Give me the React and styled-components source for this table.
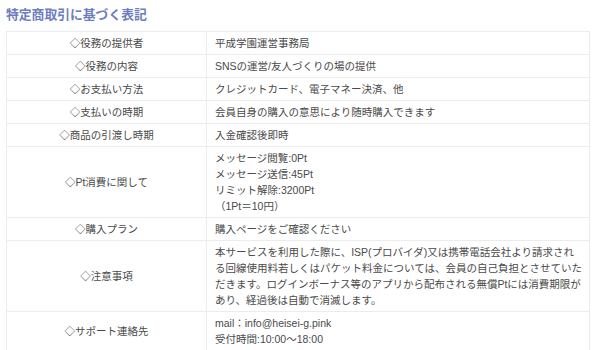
import React from "react";
import styled, { createGlobalStyle } from "styled-components";

const Global = createGlobalStyle`
  html, body { margin: 0; padding: 0; background: #fff; }
  body { font-family: "Liberation Sans", "Noto Sans CJK JP", sans-serif; }
`;

const Page = styled.div`
  padding: 7px 10px 0 6px;
  width: 584px;
`;

const Title = styled.h2`
  margin: 0 0 8px 0;
  font-size: 12.8px;
  line-height: 16px;
  font-weight: bold;
  color: #6c7dc0;
  font-family: "Liberation Sans", "Noto Sans CJK JP", sans-serif;
`;

const Table = styled.table`
  width: 584px;
  border-collapse: collapse;
  table-layout: fixed;
  font-size: 10.5px;
  line-height: 16px;
  color: #4a4a4a;
  font-family: "Liberation Sans", "Noto Sans CJK JP", sans-serif;
`;

const Cell = styled.td`
  border: 1px solid #ececec;
  padding: ${(p) => (p.$head ? "3px 8px" : "3px 6px 3px 8px")};
  vertical-align: middle;
  text-align: ${(p) => (p.$head ? "center" : "left")};
  width: ${(p) => (p.$head ? "200px" : "auto")};
  box-sizing: border-box;
`;

const Line = styled.div`
  height: auto;
`;

const rows = [
  ["◇役務の提供者", ["平成学園運営事務局"]],
  ["◇役務の内容", ["SNSの運営/友人づくりの場の提供"]],
  ["◇お支払い方法", ["クレジットカード、電子マネー決済、他"]],
  ["◇支払いの時期", ["会員自身の購入の意思により随時購入できます"]],
  ["◇商品の引渡し時期", ["入金確認後即時"]],
  ["◇Pt消費に関して", ["メッセージ閲覧:0Pt", "メッセージ送信:45Pt", "リミット解除:3200Pt", "（1Pt＝10円）"]],
  ["◇購入プラン", ["購入ページをご確認ください"]],
  [
    "◇注意事項",
    [
      "本サービスを利用した際に、ISP(プロバイダ)又は携帯電話会社より請求される回線使用料若しくはパケット料金については、会員の自己負担とさせていただきます。ログインボーナス等のアプリから配布される無償Ptには消費期限があり、経過後は自動で消滅します。",
    ],
  ],
  ["◇サポート連絡先", ["mail：info@heisei-g.pink", "受付時間:10:00～18:00"]],
];

export default function App() {
  return (
    <>
      <Global />
      <Page>
        <Title>特定商取引に基づく表記</Title>
        <Table>
          <tbody>
            {rows.map(([h, lines]) => (
              <tr key={h}>
                <Cell $head>{h}</Cell>
                <Cell>
                  {lines.map((l) => (
                    <Line key={l}>{l}</Line>
                  ))}
                </Cell>
              </tr>
            ))}
          </tbody>
        </Table>
      </Page>
    </>
  );
}
